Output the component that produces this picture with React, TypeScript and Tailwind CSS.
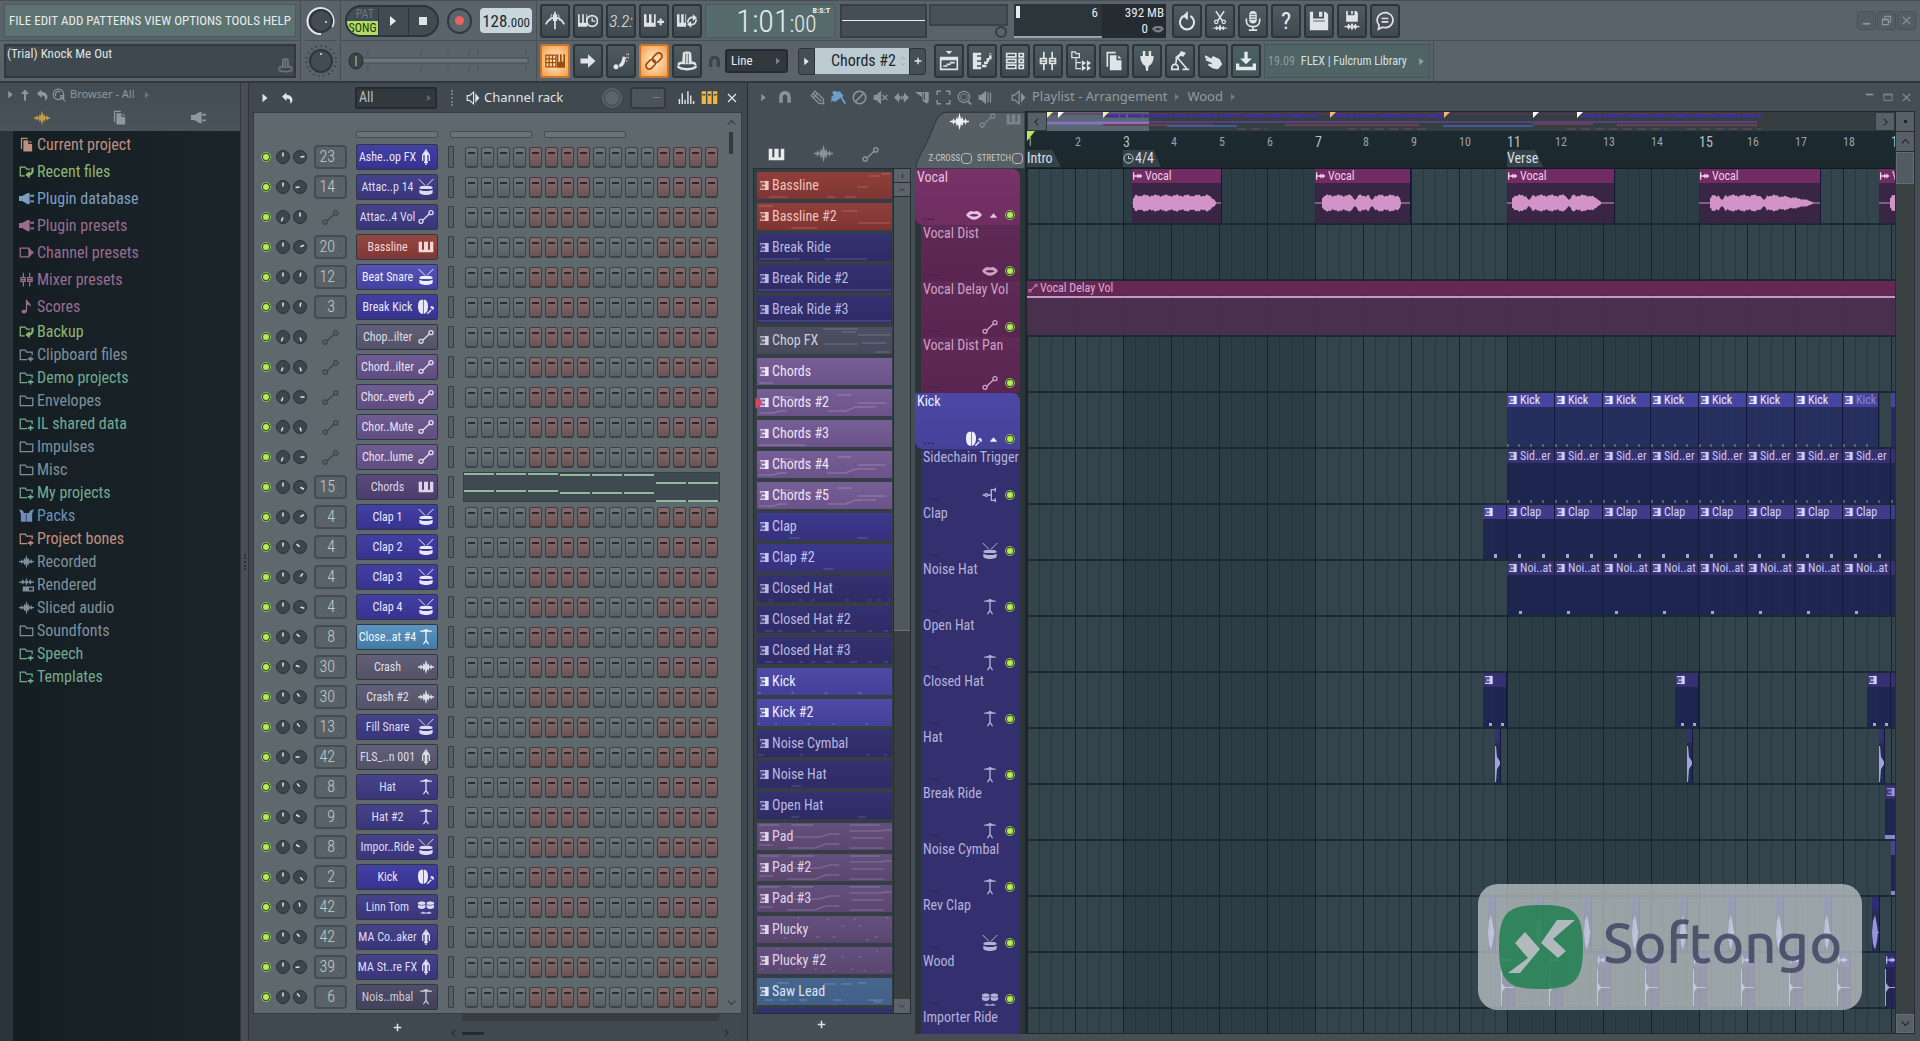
import type { ReactNode } from 'react';

const FONT = "font-['Roboto_Condensed',Roboto,'Open_Sans',sans-serif]";

/* ------------------------------------------------------------------ icons */

const S = { fill: 'none', stroke: 'currentColor', strokeWidth: 2 } as const;

const ICONS: Record<string, ReactNode> = {
  piano: <path d="M1 4h5v12h3V4h6v12h3V4h5v16H1z" />,
  wave: <path d="M0 11h3l1.500-3 1.500 3h1l1.500-5 1.500 3L12 1l2 8 1.500-3L17 11h1l1.500-3 1.500 3h3v2h-3l-1.500 3-1.500-3h-1l-1.500 5-1.500-3L12 23l-2-8-1.500 3L7 13H6l-1.500 3L3 13H0z" />,
  auto: (
    <g {...S}>
      <circle cx="4.500" cy="18.500" r="3" />
      <circle cx="19.500" cy="5.500" r="3" />
      <path d="M7 17L17 7.500" />
    </g>
  ),
  drum: (
    <g>
      <path d="M1 0l9 9M23 0l-9 9" {...S} strokeWidth="1.500" />
      <path d="M2 13c0-2 4-3 10-3s10 1 10 3-4 2-10 2-10 0-10-2z" />
      <path d="M2 16c2 1 6 2 10 2s8-1 10-2v4c0 3-5 4-10 4S2 23 2 20z" />
    </g>
  ),
  kick: (
    <g>
      <path d="M6 1C2 1 0 5 0 11s2 11 6 11h2V1zM9 1c4 0 6 4 6 10s-2 11-6 11z" />
      <path d="M14 22l6-6" {...S} />
      <path d="M18 12l5 5 1-4-3-3z" />
    </g>
  ),
  hat: <path d="M3 2.500c5-.500 7-1 8-2.500h2c1 1.500 3 2 8 2.500V4h-8v13l4 6h-2l-3-4-3 4H7l4-6V4H3z" />,
  tom: (
    <g>
      <path d="M0 6c0-3 11-3 11 0v6c0 4-11 4-11 0zM13 6c0-3 11-3 11 0v6c0 4-11 4-11 0z" />
      <path d="M7 19v2h10v-2M4 21h6M14 21h6" {...S} strokeWidth="1.500" />
      <path d="M0 8c3 2 8 2 11 0M13 8c3 2 8 2 11 0" stroke="#39357d" strokeWidth="1" fill="none" />
    </g>
  ),
  fx: (
    <g>
      <path d="M12 0l3 4H9z" />
      <path d="M6 18V9l3-5h6l3 5v9h-2V9h-2v10h1v2h-2v3h-2v-3H9v-2h1V9H8v9z" />
    </g>
  ),
  lips: <path d="M0 12c4-6 8-7 12-5 4-2 8-1 12 5-4 5-8 7-12 7S4 17 0 12zm5 0c4 3 10 3 14 0-4-2-10-2-14 0z" fillRule="evenodd" />,
  branch: (
    <g {...S}>
      <path d="M1 12h4M8 12h6M20 4h-6v16h6" />
      <circle cx="6.500" cy="12" r="2" />
      <path d="M20 1v6M20 17v6" />
    </g>
  ),
  pages: <path d="M3 1h11v2H5v16H3zM7 5h8v6h6v12H7zM17 5l4 4h-4z" />,
  plug: <path d="M0 8h5l9-5h3v18h-3l-9-5H0zM18 6h6v3h-6zM18 15h6v3h-6z" />,
  folder: <path d="M2 5h8l2 3h10v12H2z" {...S} />,
  folderPlus: (
    <g {...S}>
      <path d="M13 20H2V5h8l2 3h9v5" />
      <path d="M14 19h9M18.500 15v8" strokeWidth="2.500" />
    </g>
  ),
  recent: (
    <g {...S}>
      <path d="M9 19H2V5h8l2 3h6" />
      <path d="M21 6c2 5 0 11-6 11" strokeWidth="3.500" />
      <path d="M17 11v12l-7-6z" fill="currentColor" stroke="none" />
    </g>
  ),
  chan: (
    <g>
      <path d="M2 5h14v14H2z" {...S} />
      <path d="M16 5l4 3v2h3v4h-3v2l-4 3z" />
    </g>
  ),
  mixer: (
    <g {...S}>
      <path d="M7 1v7M7 16v7M17 1v7M17 16v7M3 9h7v6H3zM14 9h7v6h-7zM3 12h7M14 12h7" />
    </g>
  ),
  note: <path d="M11 1h2c1 5 7 5 6 12-1-3-3-4-6-4v9c0 3-2 5-5 5-5 0-5-6 0-6 1 0 2 0 3 .500z" />,
  box: <path d="M0 2l6 2 2 4h8l2-4 6-2-3 7v13H3V9zM11 9v13h1V9z" fillRule="evenodd" />,
  rendered: (
    <g>
      <path d="M0 7h4l2-4 2 4h2l2-6 2 6h2l2-4 2 4h4v2h-4l-2 3-2-3h-2l-2 5-2-5H8l-2 3-2-3H0z" />
      <path d="M7 16h16v6H7z" {...S} />
      <path d="M7 16h9v6H7z" />
    </g>
  ),
  pattern: (
    <g>
      <path d="M13 2h8v20h-8z" />
      <path d="M2 4h12M2 20h12M6 12h8" {...S} strokeWidth="3" />
      <path d="M2 9h9M2 15h9" {...S} strokeWidth="1.500" opacity=".6" />
    </g>
  ),
  audio: <path d="M0 3h3v7h7V6l5 5V6l8 6-8 6v-5l-5 5v-4H3v7H0z" />,
  speaker: (
    <g>
      <path d="M2 8h4l7-6v20l-7-6H2z" {...S} />
      <path d="M16 4l7 8-7 8z" />
    </g>
  ),
  tri: <path d="M6 2l12 10L6 22z" />,
  up: <path d="M12 1l8 9h-6v13h-4V10H4z" />,
  undo: <path d="M2 9l9-8v5c7 0 12 4 12 10 0 3-2 6-5 7 2-7-1-10-7-10v5z" />,
  searchBig: (
    <g {...S}>
      <circle cx="11" cy="11" r="9" />
      <path d="M6 14v-3a5 5 0 0 1 8-4M15 13h5v5h-5zM19 19l4 4" />
    </g>
  ),
  metronome: (
    <g {...S}>
      <path d="M1 16C4 10 8 8 12 8s8 2 11 8" />
      <path d="M12 1v21" strokeWidth="2" />
      <path d="M12 4v8" strokeWidth="5" />
      <path d="M8 4l-2 8M16 4l2 8" strokeWidth="1" />
    </g>
  ),
  pianoClock: (
    <g>
      <path d="M0 4h2v10h3V4h2v10h3V4h1v15H0z" />
      <circle cx="17" cy="12" r="6.500" {...S} />
      <path d="M17 8v4h4" {...S} strokeWidth="1.500" />
    </g>
  ),
  pianoPlus: (
    <g>
      <path d="M0 4h3v10h3V4h3v10h3V4h2v15H0z" />
      <path d="M16 13h8M20 9v8" {...S} strokeWidth="2.500" />
    </g>
  ),
  pianoLoop: (
    <g>
      <path d="M0 4h3v10h2V4h3v10h2V4h1v15H0z" />
      <path d="M13 14c0-5 3-7 7-6M23 10c0 5-3 7-7 6" {...S} />
      <path d="M19 4l5 4-5 4zM17 12l-5 4 5 4z" />
    </g>
  ),
  keyboard: (
    <g>
      <path d="M1 5h12v14H1zM1 9.500h12M1 14h12M5 5v14M9 5v14" {...S} strokeWidth="1.500" />
      <path d="M14 4h10v16H14zM16 4v9h2V4zM20 4v9h2V4z" fillRule="evenodd" />
    </g>
  ),
  arrow: <path d="M3 9h9V4l9 8-9 8v-5H3z" />,
  slide: (
    <g>
      <circle cx="6" cy="19" r="3" />
      <path d="M10 18c4-1 5-5 6-11" {...S} strokeWidth="4" />
      <path d="M19 3v10M21 3v8" {...S} strokeWidth="1" strokeDasharray="2 2" />
    </g>
  ),
  link: (
    <g {...S} transform="rotate(-45 12 12)">
      <rect x="0" y="8" width="13" height="8" rx="4" />
      <rect x="11" y="8" width="13" height="8" rx="4" />
    </g>
  ),
  stamp: (
    <g>
      <path d="M7 2c2-2 8-2 10 0l1 14H6zM10 3v12h1V3zM13 3v12h1V3z" fillRule="evenodd" />
      <path d="M2 17c0-2 2-3 4-3M22 17c0-2-2-3-4-3M1 18c2 5 20 5 22 0" {...S} strokeWidth="3" />
    </g>
  ),
  magnet: <path d="M2 22V12C2-2 22-2 22 12v10h-6V12c0-6-8-6-8 0v10z" />,
  playlist: (
    <g>
      <path d="M8 0h8l-4 4z" />
      <path d="M2 8h20v14H2zM2 10h20" {...S} />
      <path d="M5 18h5M9 16h5M13 14h6" {...S} />
    </g>
  ),
  roll: (
    <g>
      <path d="M1 2h10v3H6v2h5v4H6v2h5v4H6v2h5v3H1z" />
      <path d="M12 18h4v-4h3v-4h3V3" {...S} strokeWidth="3" strokeDasharray="5 1" />
    </g>
  ),
  rack: (
    <g {...S}>
      <path d="M2 3h11v4H2zM2 10h11v4H2zM2 17h11v4H2zM17 3h5v4h-5zM17 10h5v4h-5zM17 17h5v4h-5z" />
    </g>
  ),
  tree: (
    <g {...S}>
      <path d="M1 8V1h4l1 2h4v5zM6 9v12h6M6 14h6" strokeWidth="1.500" />
      <path d="M13 11v7l5-3.500zM19 11v7l5-3.500zM13 17v7l5-3.500zM19 17v7l5-3.500z" fill="currentColor" stroke="none" />
    </g>
  ),
  plugDown: <path d="M7 0h3v6h4V0h3v6h3c0 6-2 10-6 12l-1 6h-2l-1-6C6 16 4 12 4 6h3z" />,
  crane: (
    <g {...S}>
      <path d="M2 22c0-4 2-6 4-6s4 2 4 6zM7 15L8 8M9 8l11 13M15 22h8" />
      <path d="M7 9l8-7" strokeWidth="3" />
      <path d="M13 0l6 2-3 5-5-2z" fill="currentColor" stroke="none" />
    </g>
  ),
  hand: <path d="M2 8l1-3 7 4 2-3 8 4 3 6-5 6-6-1-6-4 1-2 4 1-1-2-7-3 1-2 4 1z" />,
  download: (
    <g>
      <path d="M10 1h4v8h5l-7 7-7-7h5z" />
      <path d="M2 15v6h20v-6" {...S} strokeWidth="4" />
    </g>
  ),
  loopback: (
    <g {...S} strokeWidth="2.500">
      <path d="M8 6a8.500 8.500 0 1 0 8 0" />
      <path d="M13 0L7 6l6 5z" fill="currentColor" stroke="none" />
    </g>
  ),
  cutWave: (
    <g>
      <path d="M7 0l8 12M17 0L9 12" {...S} strokeWidth="1.800" />
      <circle cx="7.500" cy="13" r="2" {...S} strokeWidth="1.500" />
      <circle cx="16.500" cy="13" r="2" {...S} strokeWidth="1.500" />
      <path d="M3 20h3l2-2 2 2 2-4 2 4 2-2 2 2h3v1h-3l-2 2-2-2-2 3-2-3-2 2-2-2H3z" />
    </g>
  ),
  mic: (
    <g>
      <rect x="7.500" y="0" width="9" height="15" rx="4.500" />
      <path d="M4 9v3c0 9 16 9 16 0V9M12 18v4M7 23h10" {...S} />
      <path d="M9 4h6M9 7h6M9 10h6" stroke="#444e55" strokeWidth="1" />
    </g>
  ),
  saveFill: (
    <g>
      <path d="M1 1h4v8h13V1h2l3 3v19H1zM12 1h4v6h-4z" fillRule="evenodd" />
      <path d="M5 12h14" stroke="#444e55" strokeWidth="1" />
    </g>
  ),
  saveWave: (
    <g>
      <path d="M5 0h2v5h8V0h2l2 2v11H5zM11 0h2v4h-2z" fillRule="evenodd" />
      <path d="M3 18h3l2-3 2 3 2-4 2 4 2-3 2 3h3v1.500h-3l-2 3-2-3-2 4-2-4-2 3-2-3H3z" />
    </g>
  ),
  comment: (
    <g {...S}>
      <path d="M4 22l1-5a9.500 9 0 1 1 4 2.500z" />
      <path d="M8 9h8M8 13h8" />
    </g>
  ),
  pencil: (
    <g {...S}>
      <path d="M2 9l6-7 13 12 1 8-8-1zM5 6l13 12M6 12l6-7" />
    </g>
  ),
  brush: (
    <g>
      <path d="M2 3l5-2 3 2 4-1 6 7-2 3-3 1-9 6-3-2-3 3 1-6-1-3 4-2z" />
      <path d="M17 13l6 9" {...S} strokeWidth="3" />
    </g>
  ),
  no: (
    <g {...S} strokeWidth="2.500">
      <circle cx="12" cy="12" r="10" />
      <path d="M5 19L19 5" />
    </g>
  ),
  mute: (
    <g>
      <path d="M1 8h4l8-7v22l-8-7H1z" />
      <path d="M15 8l8 8M23 8l-8 8" {...S} />
    </g>
  ),
  stretch: <path d="M0 12l8-8v5h2v6H8v5zM24 12l-8-8v5h-2v6h2v5zM11 9h2v6h-2z" />,
  slice: <path d="M0 3h11v8zM12 3h10v15l-3 4-7-5zM14 5v11h2V5z" fillRule="evenodd" />,
  select: <path d="M2 8V2h6M16 2h6v6M22 16v6h-6M8 22H2v-6" {...S} strokeWidth="2.500" />,
  zoom: (
    <g {...S}>
      <circle cx="11" cy="11" r="9" />
      <circle cx="11" cy="11" r="5" opacity=".6" />
      <path d="M17 18l6 5" strokeWidth="3" />
    </g>
  ),
  playback: (
    <g>
      <path d="M1 8h4l8-7v22l-8-7H1z" />
      <path d="M16 4v16M20 4v16" {...S} />
    </g>
  ),
  bars: <path d="M2 21v-7M6 21V6M10 21v-6M14 21V3M18 21V9M22 21v-4" {...S} />,
  cols: (
    <g>
      <path d="M1 3h6v18H1zM9 3h6v18H9zM17 3h6v18h-6z" />
      <path d="M2 8h4M10 8h4M18 8h4" stroke="#4a4530" strokeWidth="2" />
    </g>
  ),
  close: <path d="M4 4l16 16M20 4L4 20" {...S} strokeWidth="2.500" />,
  left: <path d="M15 4l-8 8 8 8" {...S} strokeWidth="2.500" />,
  right: <path d="M9 4l8 8-8 8" {...S} strokeWidth="2.500" />,
  chevUp: <path d="M4 16l8-8 8 8" {...S} strokeWidth="2.500" />,
  chevDown: <path d="M4 8l8 8 8-8" {...S} strokeWidth="2.500" />,
  plus: <path d="M12 2v20M2 12h20" {...S} strokeWidth="4" />,
  clock: (
    <g {...S}>
      <circle cx="12" cy="12" r="10" />
      <path d="M12 6v6h6" />
    </g>
  ),
  min: <path d="M4 17h16v4H4z" />,
  minTop: <path d="M2 4h18v4H2z" />,
  max: <path d="M2 5h20v15H2zM2 7h20" {...S} />,
  restore: <path d="M3 9h13v12H3zM3 11h13M8 8V3h13v12h-4" {...S} strokeWidth="2.500" />,
};

function Icon({ n, s = 16, c = '' }: { n: string; s?: number; c?: string }) {
  return (
    <svg viewBox="0 0 24 24" width={s} height={s} fill="currentColor" className={`shrink-0 ${c}`} aria-hidden="true">
      {ICONS[n]}
    </svg>
  );
}

/* ---------------------------------------------------------------- toolbar */

function ToolButton({ n, label, hot, teal, text }: { n?: string; label: string; hot?: boolean; teal?: boolean; text?: string }) {
  const look = hot
    ? 'border-[#c8762c] bg-radial from-[#fff0d0] to-[#f39a3e] text-[#a14c0d]'
    : teal
      ? 'border-[#2c353c] bg-linear-to-b from-[#4b5f63] to-[#46585c] text-[#e3e9ea]'
      : 'border-[#2c353c] bg-linear-to-b from-[#505a61] to-[#3f4950] text-[#e0e4e6]';
  return (
    <button aria-label={label} className={`flex h-[34px] w-[30px] items-center justify-center rounded-[3px] border-2 ${look}`}>
      {n ? <Icon n={n} s={20} /> : <span className="text-[17px] leading-5 font-light italic">{text}</span>}
    </button>
  );
}

function BigKnob({ label, arc }: { label: string; arc?: boolean }) {
  return (
    <span className="relative block size-8">
      <input type="range" aria-label={label} className="absolute inset-0 size-8 opacity-0" />
      <svg viewBox="0 0 32 32" className="size-8">
        {arc ? (
          <path d="M16 29A13 13 0 1 1 27 22" fill="none" stroke="#e4e8ea" strokeWidth="2" />
        ) : (
          <circle cx="16" cy="16" r="15" fill="none" stroke="#2f383e" strokeWidth="2" strokeDasharray="1 4" />
        )}
        <circle cx="16" cy="16" r="11" fill="#434c53" stroke="#2d363c" strokeWidth="2" />
        <circle cx={arc ? 21 : 16} cy={arc ? 17 : 9} r="1" fill="#dfe5e8" />
      </svg>
    </span>
  );
}

const MENU = ['FILE', 'EDIT', 'ADD', 'PATTERNS', 'VIEW', 'OPTIONS', 'TOOLS', 'HELP'];

function TopBar() {
  return (
    <header className="flex h-[83px] shrink-0 border-t border-b-2 border-t-[#475056] border-b-[#2f383f] bg-[#5a6369] text-[#e6ebec]">
      <div className="flex w-[301px] flex-col border-r border-[#474f55]">
        <div className="h-10 border-b border-[#474f55] px-1 py-[3px]">
          <nav className="flex h-full items-center justify-between border border-[#4a5a5b] bg-[#5d7371] px-1 text-[13px]">
            {MENU.map((m) => (
              <button key={m}>{m}</button>
            ))}
          </nav>
        </div>
        <div className="h-10 px-1 py-[3px]">
          <div className="flex h-full items-start justify-between border-2 border-[#30393f] bg-[#40484f] px-px text-[13px] leading-4 text-[#dfe4e6]">
            <span>(Trial) Knock Me Out</span>
            <Icon n="stamp" s={15} c="mt-3 text-[#6c757b]" />
          </div>
        </div>
      </div>
      <div className="flex w-10 flex-col items-center border-r border-[#474f55]">
        <div className="flex h-10 items-center border-b border-[#474f55]">
          <BigKnob label="Main volume" arc />
        </div>
        <div className="flex h-10 items-center">
          <BigKnob label="Main pitch" />
        </div>
      </div>
      <div className="flex w-[196px] flex-col border-r border-[#474f55]">
        <div className="flex h-10 items-center gap-1 border-b border-[#474f55] px-1">
          <div className="flex h-8 w-[98px] overflow-hidden rounded-2xl border-2 border-[#2b343a] bg-[#414b52]">
            <div className="flex w-[31px] flex-col text-right text-[12px]">
              <button className="h-[14px] pr-1 text-right leading-[14px] text-[#6c757b]">PAT</button>
              <button className="h-[14px] bg-[#b0dd62] leading-[14px] text-[#27340f]">SONG</button>
            </div>
            <button aria-label="Play" className="flex flex-1 items-center justify-center border-x border-[#2b343a]">
              <Icon n="tri" s={12} />
            </button>
            <button aria-label="Stop" className="flex flex-1 items-center justify-center">
              <span className="size-2 bg-[#dfe4e6]" />
            </button>
          </div>
          <button aria-label="Record" className="ml-1 flex size-[26px] items-center justify-center rounded-full border-2 border-[#2f383e] bg-[#5b646b]">
            <span className="size-[9px] rounded-full bg-[#f0605c]" />
          </button>
          <button aria-label="Tempo" className="ml-1 flex h-[25px] w-[54px] items-center justify-center rounded-[4px] bg-[#c9d7dd] text-[#20282d]">
            <span className="text-[17px] leading-6">128</span>
            <span className="mt-1 text-[13px] leading-5">.000</span>
          </button>
        </div>
        <div className="relative flex h-10 items-center pl-[7px]">
          <input type="range" aria-label="Song position" className="absolute inset-x-3 opacity-0" />
          <svg viewBox="0 0 182 30" className="h-[30px] w-[182px]">
            <path d="M20 4v6M73 4v6M100 4v6M121 4v6M130 4v6M178 4v6M20 20v6M73 20v6M100 20v6M121 20v6M130 20v6M178 20v6" stroke="#49525a" />
            <rect x="14" y="12" width="166" height="5" fill="#6b757b" stroke="#474f55" />
            <ellipse cx="8" cy="15" rx="7" ry="8" fill="#3b444a" stroke="#252d32" />
            <path d="M8 10v10" stroke="#b8e07a" />
          </svg>
        </div>
      </div>

      <div className="flex flex-1 flex-col">
        <div className="flex h-10 items-center border-b border-[#474f55] pl-[3px]">
          <div className="flex gap-[3px]">
            <ToolButton n="metronome" label="Metronome" />
            <ToolButton n="pianoClock" label="Wait for input" />
            <ToolButton text="3.2:" label="Countdown" />
            <ToolButton n="pianoPlus" label="Overdub" />
            <ToolButton n="pianoLoop" label="Loop recording" />
          </div>
          <div className="ml-[3px] flex h-[34px] w-[130px] justify-end border border-[#4a5a5b] bg-[#566b6c] font-light">
            <div className="flex items-baseline leading-8">
              <span className="text-[32px]">1:01</span>
              <span className="text-[23px]">:00</span>
            </div>
            <span className="-ml-1 pr-1 text-[8px] leading-3 font-bold">B:S:T</span>
          </div>
          <div className="ml-[5px] flex h-[34px] w-[87px] items-center border-2 border-[#363f45] bg-[#454e55]">
            <div className="h-px w-full bg-[#e6ebec]" />
          </div>
          <div className="ml-[2px] flex h-[34px] w-[79px] flex-col">
            <div className="h-6 border-2 border-[#3a4349] bg-[#485157]" />
            <span className="mr-px self-end rounded-full border-2 border-[#353e44] p-1" />
          </div>
          <div className="ml-[6px] flex h-[34px] w-[152px] bg-[#2c353a] text-[13px] leading-4">
            <div className="flex flex-1 justify-between border-b-2 border-[#9aa3a7] py-px pr-1 pl-[2px]">
              <span className="mt-px h-3 w-1 bg-[#e6ebec]" />
              <span>6</span>
            </div>
            <div className="flex w-16 flex-col bg-[#242c31] px-[2px] py-px text-right">
              <span>392 MB</span>
              <span className="flex items-center justify-end gap-1">
                0 <Icon n="lips" s={12} c="text-[#78828a]" />
              </span>
            </div>
          </div>
          <div className="ml-[6px] flex gap-[3px]">
            <ToolButton n="loopback" label="Undo" />
            <ToolButton n="cutWave" label="Cut" />
            <ToolButton n="mic" label="Record audio" />
            <button aria-label="Help" className="flex h-[34px] w-[30px] items-center justify-center rounded-[3px] border-2 border-[#2c353c] bg-linear-to-b from-[#505a61] to-[#3f4950] text-[24px]">
              ?
            </button>
            <ToolButton n="saveFill" label="Save" />
            <ToolButton n="saveWave" label="Render" />
            <ToolButton n="comment" label="Project info" />
          </div>
          <div className="mr-1 ml-auto flex gap-px text-[#8d969b]">
            {['min', 'restore', 'close'].map((n) => (
              <button key={n} aria-label={n} className="flex h-[19px] w-[19px] items-center justify-center rounded-[3px] border border-[#49525a] bg-[#545d64]">
                <Icon n={n} s={11} />
              </button>
            ))}
          </div>
        </div>

        <div className="flex h-10 items-center pl-[3px]">
          <div className="flex gap-[3px]">
            <ToolButton n="keyboard" label="Typing keyboard" hot />
            <ToolButton n="arrow" label="Step edit" />
            <ToolButton n="slide" label="Note slide" />
            <ToolButton n="link" label="Multilink" hot />
            <ToolButton n="stamp" label="Stamp" />
          </div>
          <Icon n="magnet" s={13} c="ml-[6px] text-[#3b444a]" />
          <button className="ml-1 flex h-6 w-[63px] items-center justify-between rounded-[3px] border-2 border-[#252c31] bg-[#31393f] px-1 text-[13px]">
            Line <Icon n="tri" s={8} c="text-[#7c858b]" />
          </button>
          <button aria-label="Previous pattern" className="ml-[10px] flex h-[27px] w-[17px] items-center justify-center rounded-l-[3px] border border-[#2c353c] bg-[#444e55]">
            <Icon n="tri" s={9} />
          </button>
          <button className="flex h-[26px] w-[94px] items-center justify-end gap-1 bg-[#bccbd2] pr-[3px] text-[16px] text-[#1e272c]">
            Chords #2
            <span className="flex flex-col text-[#8b999f]">
              <Icon n="chevUp" s={6} />
              <Icon n="chevDown" s={6} />
            </span>
          </button>
          <button aria-label="Add pattern" className="flex h-[27px] w-[17px] items-center justify-center rounded-r-[3px] border border-[#2c353c] bg-[#444e55]">
            <Icon n="plus" s={8} />
          </button>
          <div className="ml-2 flex gap-[3px]">
            <ToolButton n="playlist" label="Playlist" />
            <ToolButton n="roll" label="Piano roll" />
            <ToolButton n="rack" label="Channel rack" />
            <ToolButton n="mixer" label="Mixer" />
            <ToolButton n="tree" label="Browser" />
            <ToolButton n="pages" label="Project picker" />
            <ToolButton n="plugDown" label="Plugin picker" />
            <ToolButton n="crane" label="Tempo tapper" />
            <ToolButton n="hand" label="Touch controller" />
            <ToolButton n="download" label="Updates" teal />
          </div>
          <button className="ml-[3px] flex h-[34px] w-[166px] items-center border border-[#43575a] bg-[#506466] px-[3px] text-[12px] whitespace-nowrap text-[#d7e0e0]">
            <span className="mr-[6px] text-[#8c9c9e]">19.09</span>FLEX | Fulcrum Library
            <Icon n="tri" s={9} c="ml-auto text-[#8c9c9e]" />
          </button>
          <div className="ml-[3px] h-full border-l border-[#474f55]" />
        </div>
      </div>
    </header>
  );
}

/* ---------------------------------------------------------------- browser */

const BROWSER_TOP: [string, string, string][] = [
  ['pages', 'Current project', 'text-[#c08f7e]'],
  ['recent', 'Recent files', 'text-[#8fb673]'],
  ['plug', 'Plugin database', 'text-[#7d9dc2]'],
  ['plug', 'Plugin presets', 'text-[#9c6c92]'],
  ['chan', 'Channel presets', 'text-[#9c6c92]'],
  ['mixer', 'Mixer presets', 'text-[#9c6c92]'],
  ['note', 'Scores', 'text-[#9c6c92]'],
];
const BROWSER_DIRS: [string, string, string][] = [
  ['recent', 'Backup', 'text-[#8fb673]'],
  ['folderPlus', 'Clipboard files', 'text-[#7f909c]'],
  ['folderPlus', 'Demo projects', 'text-[#74aa90]'],
  ['folder', 'Envelopes', 'text-[#7f909c]'],
  ['folderPlus', 'IL shared data', 'text-[#74aa90]'],
  ['folder', 'Impulses', 'text-[#7f909c]'],
  ['folder', 'Misc', 'text-[#7f909c]'],
  ['folderPlus', 'My projects', 'text-[#74aa90]'],
  ['box', 'Packs', 'text-[#6f8fb8]'],
  ['folderPlus', 'Project bones', 'text-[#c08f7e]'],
  ['wave', 'Recorded', 'text-[#7f909c]'],
  ['rendered', 'Rendered', 'text-[#7f909c]'],
  ['wave', 'Sliced audio', 'text-[#7f909c]'],
  ['folder', 'Soundfonts', 'text-[#7f909c]'],
  ['folderPlus', 'Speech', 'text-[#74aa90]'],
  ['folderPlus', 'Templates', 'text-[#74aa90]'],
];

function BrowserItem({ item, tall }: { item: [string, string, string]; tall?: boolean }) {
  return (
    <a href="#" className={`flex items-center gap-[3px] pl-[6px] text-[16px] ${tall ? 'h-[27px]' : 'h-[23px]'} ${item[2]}`}>
      <Icon n={item[0]} s={15} /> {item[1]}
    </a>
  );
}

function Browser() {
  return (
    <aside className="flex w-60 shrink-0 flex-col">
      <div className="h-12 bg-linear-to-b from-[#444c53] to-[#4a5359] text-[#8f989d]">
        <div className="flex h-[23px] items-center pl-[6px]">
          <Icon n="tri" s={9} />
          <Icon n="up" s={12} c="ml-1" />
          <Icon n="undo" s={12} c="ml-[5px]" />
          <Icon n="searchBig" s={14} c="ml-1" />
          <span className="ml-1 font-['Noto_Sans',sans-serif] text-[11px]">Browser - All</span>
          <Icon n="tri" s={8} c="ml-2 text-[#6c757b]" />
        </div>
        <div className="flex h-[23px] items-center">
          <button aria-label="All" className="ml-[34px] text-[#c39a4a]"><Icon n="wave" s={16} /></button>
          <button aria-label="Files" className="ml-[62px]"><Icon n="pages" s={15} /></button>
          <button aria-label="Plugins" className="ml-[64px]"><Icon n="plug" s={15} /></button>
        </div>
      </div>
      <div className="flex flex-1">
        <div className="w-[13px] bg-[#2b343a]" />
        <div className="flex-1 bg-linear-to-r from-[#141e23] to-[#1a2429]">
          <nav>{BROWSER_TOP.map((b) => <BrowserItem key={b[1]} item={b} tall />)}</nav>
          <nav>{BROWSER_DIRS.map((b) => <BrowserItem key={b[1]} item={b} />)}</nav>
        </div>
      </div>
    </aside>
  );
}

/* ----------------------------------------------------------- channel rack */

type Tone = 'navy' | 'blue' | 'bright' | 'red' | 'grey' | 'purple' | 'plum' | 'sky' | 'dim';
const TONES: Record<Tone, string> = {
  navy: 'from-[#46438a] to-[#38357a] text-[#dddcf2]',
  blue: 'from-[#4240a3] to-[#363390] text-[#e8e7fb]',
  bright: 'from-[#5654b6] to-[#4442a0] text-[#eeeefe]',
  red: 'from-[#954742] to-[#7f3735] text-[#f3d8d4]',
  grey: 'from-[#626079] to-[#545267] text-[#dedde6]',
  purple: 'from-[#6f5c92] to-[#5f4d80] text-[#e8e0f3]',
  plum: 'from-[#594a7b] to-[#4c3d6c] text-[#dcd4e8]',
  sky: 'from-[#5c95c0] to-[#447ba6] text-[#eef6fc]',
  dim: 'from-[#4f4d68] to-[#434159] text-[#cbcad8]',
};

/* insert number, name, icon, tone, pan and volume angles */
const CHANNELS: [number, string, string, Tone, number, number][] = [
  [23, 'Ashe..op FX', 'fx', 'blue', 0, 85],
  [14, 'Attac..p 14', 'drum', 'navy', 0, -95],
  [0, 'Attac..4 Vol', 'auto', 'navy', -160, 0],
  [20, 'Bassline', 'piano', 'red', 0, 65],
  [12, 'Beat Snare', 'drum', 'bright', 0, 10],
  [3, 'Break Kick', 'kick', 'blue', 0, 10],
  [0, 'Chop..ilter', 'auto', 'grey', -160, 165],
  [0, 'Chord..ilter', 'auto', 'purple', -160, 165],
  [0, 'Chor..everb', 'auto', 'purple', -160, 90],
  [0, 'Chor..Mute', 'auto', 'purple', -160, 165],
  [0, 'Chor..lume', 'auto', 'purple', -160, 90],
  [15, 'Chords', 'piano', 'plum', 0, 120],
  [4, 'Clap 1', 'drum', 'blue', 0, 60],
  [4, 'Clap 2', 'drum', 'blue', 0, -50],
  [4, 'Clap 3', 'drum', 'blue', 0, 40],
  [4, 'Clap 4', 'drum', 'blue', 0, 105],
  [8, 'Close..at #4', 'hat', 'sky', 0, -50],
  [30, 'Crash', 'wave', 'grey', 0, -70],
  [30, 'Crash #2', 'wave', 'grey', 0, -40],
  [13, 'Fill Snare', 'drum', 'navy', 0, -40],
  [42, 'FLS_..n 001', 'fx', 'grey', 0, -90],
  [8, 'Hat', 'hat', 'navy', 0, -40],
  [9, 'Hat #2', 'hat', 'navy', 0, -60],
  [8, 'Impor..Ride', 'drum', 'navy', 0, -60],
  [2, 'Kick', 'kick', 'blue', 0, 140],
  [42, 'Linn Tom', 'tom', 'navy', 0, -10],
  [42, 'MA Co..aker', 'fx', 'navy', 0, -45],
  [39, 'MA St..re FX', 'fx', 'navy', 0, -95],
  [6, 'Nois..mbal', 'hat', 'dim', 0, -40],
];

function Led({ label }: { label: string }) {
  return (
    <button aria-label={label} className="flex size-[10px] shrink-0 items-center justify-center rounded-full border border-[#8fc450] bg-[#33402b]">
      <span className="size-[6px] rounded-full bg-[#b4ec5c]" />
    </button>
  );
}

function Knob({ angle, label }: { angle: number; label: string }) {
  return (
    <span className="relative block size-[14px]">
      <input type="range" aria-label={label} className="absolute inset-0 size-[14px] opacity-0" />
      <svg viewBox="0 0 14 14" className="size-[14px]">
        <circle cx="7" cy="7" r="6.500" fill="#3d464c" stroke="#283136" />
        <path d="M7 2.500v4" stroke="#dfe6e8" strokeWidth="1.500" transform={`rotate(${angle} 7 7)`} />
      </svg>
    </span>
  );
}

function Steps({ name }: { name: string }) {
  return (
    <div className="flex gap-[3px]">
      {Array.from({ length: 16 }, (_, i) => (
        <input
          key={i}
          type="checkbox"
          aria-label={`${name} step ${i + 1}`}
          className={
            Math.floor(i / 4) % 2
              ? 'h-[21px] w-[13px] appearance-none rounded-[3px] border border-b-2 border-[#3c3c40] bg-[linear-gradient(#2a2a2c,#2a2a2c),linear-gradient(#876b6b,#6d5354)] bg-[length:7px_2px,100%_100%] bg-[position:center_4px,0_0] bg-no-repeat'
              : 'h-[21px] w-[13px] appearance-none rounded-[3px] border border-b-2 border-[#3b4549] bg-[linear-gradient(#2a2f32,#2a2f32),linear-gradient(#6d787b,#566164)] bg-[length:7px_2px,100%_100%] bg-[position:center_4px,0_0] bg-no-repeat'
          }
        />
      ))}
    </div>
  );
}

function ChannelRow({ ch }: { ch: (typeof CHANNELS)[number] }) {
  const [num, name, icon, tone, pan, vol] = ch;
  return (
    <div className="flex h-[30px] items-center pl-[7px]">
      <Led label={`Mute ${name}`} />
      <div className="ml-[5px] flex gap-[3px]">
        <Knob angle={pan} label={`${name} pan`} />
        <Knob angle={vol} label={`${name} volume`} />
      </div>
      {num ? (
        <button className="ml-[7px] flex h-6 w-[33px] items-center justify-end gap-[3px] rounded-[4px] border-2 border-[#434c52] bg-[#596367] pr-[2px] text-[16px] font-light text-[#c3cacd]">
          {num}
          <span className="flex flex-col gap-px text-[#424b51]">
            <Icon n="chevUp" s={5} />
            <Icon n="chevDown" s={5} />
          </span>
        </button>
      ) : (
        <span className="ml-[7px] flex w-[33px] justify-center text-[#3f484d]">
          <Icon n="auto" s={17} />
        </span>
      )}
      <button className={`ml-[9px] flex h-[26px] w-[82px] items-center rounded-[2px] border border-[#2f3646] bg-linear-to-b pr-[3px] text-[12px] ${TONES[tone]}`}>
        <span className="flex-1 text-center whitespace-nowrap">{name}</span>
        <Icon n={icon} s={16} />
      </button>
      <button aria-label={`Select ${name}`} className="ml-[10px] h-[22px] w-[6px] rounded-[1px] border border-[#353e43] bg-[#566064]" />
      {name === 'Chords' ? (
        <svg viewBox="0 0 257 30" className="ml-[9px] h-[30px] w-[257px]">
          <rect x=".500" y=".500" width="256" height="29" fill="#40494f" stroke="#363f44" />
          <path
            d="M1 2h30M33 2h30M65 2h30M97 3h30M129 3h30M161 3h30M193 11h30M225 11h30M1 19h30M33 19h30M65 19h30M97 21h30M129 21h30M161 21h30M193 29h30M225 29h30"
            stroke="#8fba9d"
            strokeWidth="2"
          />
        </svg>
      ) : (
        <div className="ml-[11px]"><Steps name={name} /></div>
      )}
    </div>
  );
}

function ChannelRack() {
  return (
    <section className="flex w-[498px] shrink-0 flex-col border-r-[5px] border-l-4 border-[#3f484e] bg-[#40494f]">
      <div className="flex h-[29px] items-center text-[#dfe4e6]">
        <Icon n="tri" s={10} c="ml-[7px]" />
        <Icon n="undo" s={12} c="ml-[11px]" />
        <button className="ml-[62px] flex h-[22px] w-[82px] items-center justify-between rounded-[2px] border-2 border-[#252c31] bg-[#31393f] px-[2px] text-[14px] text-[#b4bbbf]">
          All <Icon n="tri" s={8} c="text-[#5c656b]" />
        </button>
        <span className="ml-[14px] h-4 border-l-2 border-dotted border-[#747d83]" />
        <Icon n="speaker" s={14} c="ml-[13px]" />
        <h2 className="ml-1 w-[110px] font-['Noto_Sans',sans-serif] text-[13px]">Channel rack</h2>
        <span className="ml-2 flex size-5 items-center justify-center rounded-full border-2 border-[#596268]">
          <span className="size-[14px] rounded-full bg-[#5b646a]" />
        </span>
        <button className="ml-2 flex h-[22px] w-9 items-center justify-end rounded-[4px] border-2 border-[#333b41] bg-[#4b545a] pr-1 text-[10px] text-[#8a9399]">
          ---
        </button>
        <Icon n="bars" s={17} c="ml-[12px]" />
        <Icon n="cols" s={17} c="ml-[6px] text-[#edb544]" />
        <Icon n="close" s={12} c="ml-2" />
      </div>
      <div className="flex border border-[#343d43] bg-[#5f696d] pb-px">
        <div className="flex-1">
          <div className="flex h-[29px] items-end gap-3 pb-1 pl-[102px]">
            {[0, 1, 2].map((i) => (
              <span key={i} className="h-[7px] w-[82px] rounded-[2px] border border-[#444d52] bg-[#6a7478]" />
            ))}
          </div>
          {CHANNELS.map((c) => <ChannelRow key={c[1]} ch={c} />)}
        </div>
        <div className="flex w-[20px] flex-col items-center pt-1 pb-1 text-[#343c41]">
          <Icon n="chevUp" s={11} />
          <span className="mt-1 h-[22px] w-1 bg-[#343c41]" />
          <Icon n="chevDown" s={11} c="mt-auto" />
        </div>
      </div>
      <div className="flex flex-1 items-start text-[#dfe4e6]">
        <button aria-label="Add channel" className="mt-[9px] ml-[140px]"><Icon n="plus" s={9} /></button>
        <Icon n="left" s={10} c="mt-[14px] ml-[47px] text-[#252c31]" />
        <div className="ml-[3px] h-[7px] w-[257px] bg-[#353d41]">
          <div className="mt-[18px] h-[3px] w-[22px] bg-[#252c31]" />
        </div>
        <Icon n="right" s={10} c="mt-[14px] ml-[2px] text-[#252c31]" />
      </div>
    </section>
  );
}

/* --------------------------------------------------------------- playlist */

type PTone = 'red' | 'navy' | 'grey' | 'purple' | 'blue' | 'bright' | 'mauve' | 'sky';
const PTONES: Record<PTone, string> = {
  red: 'from-[#8f3f3b] to-[#803532] text-[#f0c4bd]',
  navy: 'from-[#333170] to-[#2e2b66] text-[#b9b8e0]',
  grey: 'from-[#4c4f62] to-[#474a5b] text-[#cfd0da]',
  purple: 'from-[#765f96] to-[#6b5389] text-[#eee4f6]',
  blue: 'from-[#3c388c] to-[#36327f] text-[#c6c5ee]',
  bright: 'from-[#4e4ba6] to-[#43409a] text-[#ecebff]',
  mauve: 'from-[#63507e] to-[#5b466f] text-[#e2d3e9]',
  sky: 'from-[#47658c] to-[#41618a] text-[#d7e6f4]',
};
/* name, tone, note preview path in a 134 x 27 box */
const SPARSE = 'M12 25h3M42 25h3M54 25h3M88 25h3M110 25h3M120 25h3M130 25h2';
const CHORDN = 'M2 24h14l6-2h8M20 8h12l8 2h14M70 22h18l10-4h20M80 6h14M100 14h28';
const PADN = 'M2 2h20M34 2h22M92 2h30M36 14h26l10-3h10M2 22h14M30 25h28l10-4h14M92 8h30l6-1h6M94 15h32M92 25h34';
const PATTERNS: [string, PTone, string][] = [
  ['Bassline', 'red', 'M12 25h18M70 25h8M88 25h10M100 15h10M112 4h10M124 2h8'],
  ['Bassline #2', 'red', 'M2 3h14M34 25h26M84 8h16M100 20h32'],
  ['Break Ride', 'navy', 'M2 25h40M67 25h42'],
  ['Break Ride #2', 'navy', 'M1 25h132'],
  ['Break Ride #3', 'navy', 'M1 25h132'],
  ['Chop FX', 'grey', 'M66 2h34M84 5h14M100 8h32M66 17h34M104 16h24M118 25h14'],
  ['Chords', 'purple', 'M2 25h14'],
  ['Chords #2', 'purple', CHORDN],
  ['Chords #3', 'purple', 'M2 25h46'],
  ['Chords #4', 'purple', CHORDN],
  ['Chords #5', 'purple', CHORDN],
  ['Clap', 'blue', 'M32 25h10M100 25h10'],
  ['Clap #2', 'blue', 'M66 25h10'],
  ['Closed Hat', 'navy', SPARSE],
  ['Closed Hat #2', 'navy', 'M8 25h8M20 25h5M54 25h4M68 25h8M80 25h4M86 25h12M110 25h4M126 25h4'],
  ['Closed Hat #3', 'navy', 'M8 25h8M20 25h5M42 25h4M54 25h4M68 25h8M92 25h8M110 25h4M126 25h4'],
  ['Kick', 'bright', 'M1 25h3M34 25h3M67 25h3M100 25h4'],
  ['Kick #2', 'bright', 'M1 25h2M18 25h2M50 25h2M75 25h2M108 25h2'],
  ['Noise Cymbal', 'navy', 'M1 25h6M42 25h3M109 25h3M126 25h3'],
  ['Noise Hat', 'navy', 'M34 25h10'],
  ['Open Hat', 'navy', 'M34 25h8M100 25h8'],
  ['Pad', 'mauve', PADN],
  ['Pad #2', 'mauve', PADN],
  ['Pad #3', 'mauve', PADN],
  ['Plucky', 'mauve', 'M40 2h2M70 3h2M96 3h2M128 2h2M84 10h3M101 10h3M26 22h3M59 21h3M75 21h3M108 24h3M117 21h3'],
  ['Plucky #2', 'mauve', 'M20 2h2M66 2h2M84 10h2M101 10h2M118 4h2M4 22h2M22 22h2M40 22h2M57 22h2M75 24h2M94 22h2M106 24h2M123 24h2'],
  ['Saw Lead', 'sky', 'M20 5h12M66 6h12M84 6h10M100 5h8M8 22h8M22 22h8M42 22h8M76 22h8M110 22h16M116 24h8'],
];

function Picker() {
  return (
    <div className="flex w-[158px] shrink-0 flex-col">
      <div className="flex h-[57px] shrink-0 items-end pb-[5px] text-[#8a9398]">
        <button aria-label="Patterns" className="ml-[15px] text-[#e6ebec]"><Icon n="piano" s={17} /></button>
        <button aria-label="Audio clips" className="ml-[29px]"><Icon n="wave" s={19} /></button>
        <button aria-label="Automation clips" className="ml-[29px]"><Icon n="auto" s={17} /></button>
      </div>
      <div className="flex min-h-0 flex-1 border border-[#262e33] bg-[#353e44]">
        <div className="flex flex-1 flex-col gap-1 overflow-hidden py-[3px] pr-px pl-[3px]">
          {PATTERNS.map(([name, tone, notes]) => (
            <button key={name} className={`relative flex h-[27px] shrink-0 items-center gap-[2px] bg-linear-to-b pl-[2px] text-[14px] ${PTONES[tone]}`}>
              <svg viewBox="0 0 134 27" preserveAspectRatio="none" className="absolute inset-0 h-full w-full opacity-20">
                <path d={notes} stroke="currentColor" strokeWidth="1.500" fill="none" />
              </svg>
              <Icon n="pattern" s={11} />
              {name}
              {name === 'Chords #2' && <Icon n="tri" s={14} c="absolute -left-[5px] text-[#e2435a]" />}
            </button>
          ))}
          <span className="h-[6px] shrink-0 bg-[#312e74]" />
        </div>
        <div className="flex w-[17px] flex-col border-l border-[#262e33] bg-[#373f42] text-[#20282c]">
          <span className="flex h-[14px] items-center justify-center border-b border-[#262e33] bg-[#5b646a]"><span className="h-1 w-px bg-[#20282c]" /></span>
          <span className="flex h-[14px] items-center justify-center border-b border-[#262e33] bg-[#5b646a]"><Icon n="chevUp" s={8} /></span>
          <span className="h-[434px] border-b border-[#6b7479] bg-[#4f585d]" />
          <span className="mt-auto flex h-[14px] items-center justify-center bg-[#5b646a]"><Icon n="chevDown" s={8} /></span>
        </div>
      </div>
      <button aria-label="Add" className="flex h-5 shrink-0 items-center pl-16 text-[#dfe4e6]"><Icon n="plus" s={9} /></button>
    </div>
  );
}

/* track name, icon, kind */
const TRACKS: [string, string, 'pinkHead' | 'pink' | 'blueHead' | 'navy'][] = [
  ['Vocal', 'lips', 'pinkHead'],
  ['Vocal Dist', 'lips', 'pink'],
  ['Vocal Delay Vol', 'auto', 'pink'],
  ['Vocal Dist Pan', 'auto', 'pink'],
  ['Kick', 'kick', 'blueHead'],
  ['Sidechain Trigger', 'branch', 'navy'],
  ['Clap', 'drum', 'navy'],
  ['Noise Hat', 'hat', 'navy'],
  ['Open Hat', 'hat', 'navy'],
  ['Closed Hat', 'hat', 'navy'],
  ['Hat', 'hat', 'navy'],
  ['Break Ride', 'hat', 'navy'],
  ['Noise Cymbal', 'hat', 'navy'],
  ['Rev Clap', 'drum', 'navy'],
  ['Wood', 'tom', 'navy'],
  ['Importer Ride', '', 'navy'],
];
const TRACK_TONES = {
  pinkHead: 'rounded-tr-lg rounded-bl-lg bg-linear-to-b from-[#783268] to-[#6f2d60] text-[#e9c0de]',
  pink: 'ml-[6px] bg-linear-to-b from-[#5f2a56] to-[#59244f] text-[#cfa0c4]',
  blueHead: 'rounded-tr-lg rounded-bl-lg bg-linear-to-b from-[#4c49a6] to-[#454198] text-[#eeeeff]',
  navy: 'ml-[6px] bg-[#343070] text-[#b3b3d8]',
};

function TrackHead({ t }: { t: (typeof TRACKS)[number] }) {
  const head = t[2] === 'pinkHead' || t[2] === 'blueHead';
  if (!t[1]) return <div className={`flex-1 pl-[2px] text-[14px] leading-[17px] ${TRACK_TONES[t[2]]}`}>{t[0]}</div>;
  return (
    <div className={`flex h-14 shrink-0 flex-col justify-between pr-[5px] pl-[2px] text-[14px] ${TRACK_TONES[t[2]]}`}>
      <span className="leading-[17px] whitespace-nowrap">{t[0]}</span>
      <div className="flex items-center justify-end gap-[7px] pb-[2px]">
        <span className="mr-auto pl-[6px] text-[14px] leading-4 text-[#1d1a40]">...</span>
        <Icon n={t[1]} s={16} />
        {head && <Icon n="tri" s={9} c="-rotate-90" />}
        <Led label={`Mute track ${t[0]}`} />
      </div>
    </div>
  );
}

type Clip = {
  x: number;
  w: number;
  label?: string;
  icon?: string;
  head: string;
  body: string;
  faded?: boolean;
  art?: ReactNode;
};

function blob(from: number, to: number, pinch: number[], tail: number) {
  const top: string[] = [];
  const bottom: string[] = [];
  for (let x = from; x <= to; x += 1) {
    const near = Math.min(...pinch.map((p) => Math.abs(p - x)), 99);
    let a = 7.5 + Math.sin(x * 1.7) * 0.6 + Math.sin(x * 0.6) * 0.8;
    if (near < 3) a = 3 + near;
    if (x > to - tail) a = Math.max(1, a * Math.sqrt((to - x) / tail));
    if (x < from + 2) a = 5;
    top.push(`${x} ${20 - a}`);
    bottom.unshift(`${x} ${20 + a}`);
  }
  return `M${top.join('L')}L${bottom.join('L')}z`;
}

function vocal(x: number, w: number, from: number, to: number, pinch: number[], tail: number): Clip {
  return {
    x,
    w,
    label: 'Vocal',
    icon: 'audio',
    head: 'bg-[#702c63] text-[#f3cdea]',
    body: 'bg-[#3a2344]/90',
    art: <path d={`M0 19.500H${w}V20.500H0z${blob(from, to, pinch, tail)}`} fill="#d193c8" />,
  };
}

const BAR = 48;
const bars = (n: number, start: number, make: (i: number) => Clip) => Array.from({ length: n }, (_, i) => ({ ...make(i), x: start + i * BAR }));
const NAVY_BODY = 'bg-[#1d2350]/90';
const ticks = <path d="M1 37v3M12 37v3M24 37v3M36 37v3" stroke="#8c8fc2" />;

const CLIPS: Clip[][] = [
  [
    vocal(105, 90, 1, 84, [], 8),
    vocal(288, 96, 7, 86, [40, 57], 3),
    vocal(480, 108, 5, 94, [22, 62], 12),
    vocal(672, 122, 11, 114, [23, 65], 40),
    vocal(852, 90, 11, 84, [], 8),
  ],
  [],
  [
    {
      x: 0,
      w: 1400,
      label: 'Vocal Delay Vol',
      icon: 'auto',
      head: 'bg-[#632854] text-[#e0a9d3]',
      body: 'bg-[#4d2f50]/90',
      art: <path d="M0 2H1400" stroke="#cf92c2" strokeWidth="2" />,
    },
  ],
  [],
  [
    ...bars(8, 480, (i) => ({ x: 0, w: i === 7 ? 36 : 48, label: 'Kick', icon: 'pattern', faded: i === 7, head: 'bg-[#4744a0] text-[#e6e6ff]', body: 'bg-[#252d60]/90', art: ticks })),
    { x: 864, w: 48, head: 'bg-[#4744a0]', body: 'bg-[#252d60]' },
  ],
  bars(9, 480, (i) => ({ x: 0, w: 48, label: i < 8 ? 'Sid..er' : '', icon: i < 8 ? 'pattern' : undefined, head: 'bg-[#353070] text-[#c9c9f0]', body: NAVY_BODY, art: ticks })),
  [
    { x: 456, w: 24, icon: 'pattern', head: 'bg-[#3f3a8a] text-[#dcdcfa]', body: NAVY_BODY, art: <path d="M11 35h3v4h-3z" fill="#a3a2dc" /> },
    ...bars(9, 480, (i) => ({ x: 0, w: 48, label: i < 8 ? 'Clap' : '', icon: i < 8 ? 'pattern' : undefined, head: 'bg-[#3f3a8a] text-[#d3d3f6]', body: NAVY_BODY, art: <path d="M11 35h3v4h-3zM35 35h3v4h-3z" fill="#a3a2dc" /> })),
  ],
  bars(9, 480, (i) => ({ x: 0, w: 48, label: i < 8 ? 'Noi..at' : '', icon: i < 8 ? 'pattern' : undefined, head: 'bg-[#353070] text-[#c9c9f0]', body: NAVY_BODY, art: <path d="M12 36h3v3h-3z" fill="#a3a2dc" /> })),
  [],
  [456, 648, 840, 864].map((x) => ({ x, w: 24, icon: x < 864 ? 'pattern' : undefined, head: 'bg-[#353070] text-[#cfcff6]', body: NAVY_BODY, art: <path d="M6 36h3v3h-3zM18 36h3v3h-3z" fill="#a3a2dc" /> })),
  [468, 660, 852].map((x) => ({ x, w: 6, head: 'bg-[#353070]', body: 'bg-[#1d2350]/70', art: <path d="M0 3h1l1 11 4 6-4 6-1 13H0z" fill="#a3a2dc" /> })),
  [{ x: 858, w: 48, icon: 'pattern', head: 'bg-[#353070] text-[#9493cf]', body: NAVY_BODY, art: <path d="M0 36h48v4H0z" fill="#8986cc" /> }],
  [{ x: 864, w: 48, head: 'bg-[#4744a0]', body: NAVY_BODY, art: <path d="M0 36h48v4H0z" fill="#8986cc" /> }],
  bars(9, 461, () => ({ x: 0, w: 8, head: 'bg-[#2f2b72]', body: 'bg-[#1f2152]/70', art: <path d="M0 22L1 10l2-6 2 10 1 7h2v1H6l-1 8-2 9-2-6z" fill="#9a92dc" /> })),
  bars(9, 474, () => ({ x: 0, w: 14, icon: 'audio', head: 'bg-[#312d78] text-[#b4b2e6]', body: 'bg-[#1f2152]/80', art: <path d="M0 2h1v14l3 4h9v1H4l-3 4v14H0z" fill="#a3a2dc" /> })),
  [],
];

function ClipView({ c }: { c: Clip }) {
  return (
    <div className={`absolute top-0 flex h-[54px] flex-col overflow-hidden border-r border-[#12193a] ${c.body}`} style={{ left: c.x, width: c.w }}>
      <div className={`flex h-[14px] shrink-0 items-center gap-[2px] pl-px text-[12px] leading-[14px] whitespace-nowrap ${c.head}`}>
        {c.icon && <Icon n={c.icon} s={10} />}
        <span className={c.faded ? 'opacity-40' : ''}>{c.label}</span>
      </div>
      <svg width={c.w} height="41" className="shrink-0">{c.art}</svg>
    </div>
  );
}

const GRID =
  'bg-[repeating-linear-gradient(90deg,#15232b_0_1px,transparent_1px_48px),repeating-linear-gradient(90deg,#263840_0_1px,transparent_1px_12px),linear-gradient(90deg,#33444d_0_96px,#2c3d46_96px_288px,#33444d_288px_480px,#2c3d46_480px_672px,#33444d_672px)]';

function MiniMap() {
  return (
    <svg viewBox="0 0 828 19" preserveAspectRatio="none" className="h-[19px] min-w-0 flex-1 bg-[#353f41]">
      <rect width="102" height="19" fill="#5a6672" />
      <path d="M0 2h56M56 2h660" stroke="#6b2f66" />
      <path d="M58 4h212M286 4h110M534 4h180" stroke="#41309a" strokeWidth="3" strokeDasharray="14 1 6 2" />
      <path d="M0 11h102" stroke="#8274c0" strokeWidth="3" />
      <path d="M102 10h608" stroke="#57407e" strokeWidth="2" />
      <path d="M56 13h110M238 13h134M486 12h60M570 13h140" stroke="#713f55" strokeWidth="2" />
      <path d="M120 14h70M396 14h90" stroke="#405c93" strokeWidth="2" />
      <path d="M190 17h30M300 17h80M520 17h100M640 17h74" stroke="#62506f" strokeDasharray="9 5" />
      {[0, 11, 56, 283, 397, 486, 530].map((x, i) => (
        <path key={x} d={`M${x} 0h6l-6 6z`} fill={i === 3 || i === 4 ? '#f0b878' : i === 0 || i === 2 ? '#f7efaa' : '#ffffff'} />
      ))}
    </svg>
  );
}

const FLAG = 'absolute top-[19px] flex h-[17px] items-center bg-[#35424a] text-[14px] text-[#d8dfe2]';

function Ruler() {
  return (
    <div className="relative h-[38px] shrink-0 overflow-hidden border-b border-[#131b20] bg-linear-to-b from-[#1d2a31] to-[#1c282e] text-[#98a3a9]">
      <div className="flex">
        {Array.from({ length: 19 }, (_, i) => (
          <span key={i} className={`w-12 shrink-0 leading-[22px] ${i % 4 === 2 ? 'text-[14px] text-[#b7c0c5]' : 'text-[12px]'}`}>
            {i + 1}
          </span>
        ))}
      </div>
      <svg viewBox="0 0 8 10" className="absolute top-0 left-0 h-[10px] w-2"><path d="M0 0h8L0 10z" fill="#b8e85a" /></svg>
      <span className={`${FLAG} left-0 w-[34px] [clip-path:polygon(0_0,75%_0,100%_100%,0_100%)]`}>Intro</span>
      <span className={`${FLAG} left-24 w-[38px] gap-px [clip-path:polygon(0_0,80%_0,100%_100%,0_100%)]`}>
        <Icon n="clock" s={11} />4/4
      </span>
      <span className={`${FLAG} left-[480px] w-9 [clip-path:polygon(0_0,78%_0,100%_100%,0_100%)]`}>Verse</span>
    </div>
  );
}

function Playlist() {
  const tools: [string, string][] = [
    ['pencil', ''],
    ['brush', 'text-[#6a9fc9]'],
    ['no', ''],
    ['mute', ''],
    ['stretch', ''],
    ['slice', ''],
    ['select', ''],
    ['zoom', ''],
    ['playback', ''],
  ];
  return (
    <section className="flex min-w-0 flex-1 flex-col border-l border-[#262e33] bg-[#454e54]">
      <div className="flex h-7 shrink-0 items-center pl-[11px] text-[#8a9398]">
        <Icon n="tri" s={9} />
        <button aria-label="Snap" className="ml-[10px]"><Icon n="magnet" s={14} /></button>
        <div className="ml-[18px] flex gap-[6px]">
          {tools.map(([n, c]) => (
            <button key={n} aria-label={n}><Icon n={n} s={15} c={c} /></button>
          ))}
        </div>
        <Icon n="speaker" s={15} c="ml-[18px]" />
        <h2 className="ml-[6px] flex items-center gap-[6px] font-['Noto_Sans',sans-serif] text-[13px] text-[#939ca1]">
          Playlist - Arrangement <Icon n="tri" s={8} c="opacity-60" /> Wood <Icon n="tri" s={8} c="opacity-60" />
        </h2>
        <div className="mr-2 ml-auto flex items-center gap-2">
          <button aria-label="Minimize"><Icon n="minTop" s={10} /></button>
          <button aria-label="Maximize"><Icon n="max" s={10} /></button>
          <button aria-label="Close"><Icon n="close" s={11} /></button>
        </div>
      </div>
      <div className="flex min-h-0 flex-1 gap-1 pb-[7px] pl-[5px]">
        <Picker />
        <div className="flex min-w-0 flex-1">
          <div className="flex w-[111px] shrink-0 flex-col border-r border-[#20282d] bg-[#2b3439]">
            <div className="relative h-[58px] shrink-0 bg-[#454e54]">
              <svg viewBox="0 0 111 58" className="absolute inset-0 h-full w-full">
                <path d="M1 58C1 48 10 38 17 20 22 7 24 1 34 1H111V58z" fill="#555f64" stroke="#2b3338" />
              </svg>
              <div className="relative flex justify-end gap-[10px] pt-px pr-1 text-[#7b848a]">
                <Icon n="wave" s={19} c="text-[#eef1f2]" />
                <Icon n="auto" s={17} />
                <Icon n="piano" s={15} />
              </div>
              <div className="relative flex justify-end gap-[5px] pt-[21px] pr-[2px] text-[9px] leading-3 text-[#c4cbce]">
                <label className="flex items-center gap-px">Z-CROSS<input type="checkbox" className="size-[11px] appearance-none rounded-[4px] border border-[#b4bcc0]" /></label>
                <label className="flex items-center gap-px">STRETCH<input type="checkbox" className="size-[11px] appearance-none rounded-[4px] border border-[#b4bcc0]" /></label>
              </div>
            </div>
            <div className="flex min-h-0 flex-1 flex-col overflow-hidden pr-[5px]">
              {TRACKS.map((t) => <TrackHead key={t[0]} t={t} />)}
            </div>
          </div>
          <div className="flex min-w-0 flex-1 flex-col border border-r-0 border-[#20282d]">
            <div className="flex h-[19px] shrink-0">
              <button aria-label="Scroll left" className="flex w-5 items-center justify-center border border-[#30383d] bg-[#566066] text-[#1f272b]"><Icon n="left" s={10} /></button>
              <MiniMap />
              <button aria-label="Scroll right" className="flex w-5 items-center justify-center border border-[#30383d] bg-[#566066] text-[#1f272b]"><Icon n="right" s={10} /></button>
            </div>
            <Ruler />
            <div className={`min-h-0 flex-1 overflow-hidden ${GRID}`}>
              {CLIPS.map((row, i) => (
                <div key={i} className="relative h-14 overflow-hidden border-b-2 border-[#17252c]/80">
                  {row.map((c, j) => <ClipView key={j} c={c} />)}
                </div>
              ))}
            </div>
          </div>
          <div className="mr-[5px] flex w-5 shrink-0 flex-col border border-[#262e33] bg-[#3a4142] text-[#1f272b]">
            <span className="flex h-5 items-center justify-center border-b border-[#262e33] bg-[#566066]"><span className="size-[3px] bg-[#1f272b]" /></span>
            <span className="flex h-5 items-center justify-center border-b border-[#262e33] bg-[#566066]"><Icon n="chevUp" s={11} /></span>
            <span className="h-8 border border-[#646d73] bg-[#525b61]" />
            <span className="mt-auto flex h-[19px] items-center justify-center border border-[#646d73] bg-[#566066]"><Icon n="chevDown" s={11} /></span>
          </div>
        </div>
      </div>
    </section>
  );
}

/* -------------------------------------------------------------- watermark */

function Badge() {
  return (
    <div className="absolute right-[58px] bottom-[31px] flex h-[126px] w-[384px] items-center rounded-[20px] bg-[#d4dada]/65 pl-[21px]">
      <svg viewBox="0 0 84 84" className="size-[84px]">
        <path d="M42 0C74 0 84 6 84 42S74 84 42 84 0 78 0 42 10 0 42 0z" fill="#1f7f4f" opacity=".85" />
        <path d="M16 38l10-11 15 17-20 24H9l20-15zM76 15H58L42 38l17 15 8-7-13-12z" fill="#b0b9bc" />
      </svg>
      <span className="ml-5 pb-2 font-['Ubuntu','Noto_Sans',sans-serif] text-[56px] leading-none font-medium text-[#454b66]/90">Softongo</span>
    </div>
  );
}

export default function App() {
  return (
    <div className={`relative flex h-screen flex-col overflow-hidden bg-[#454e54] ${FONT}`}>
      <TopBar />
      <main className="flex min-h-0 flex-1">
        <Browser />
        <div className="flex w-[9px] shrink-0 items-center justify-center border-x border-[#30383d] bg-[#475056]">
          <span className="h-4 border-l-2 border-dotted border-[#2b3439]" />
        </div>
        <ChannelRack />
        <Playlist />
      </main>
      <Badge />
    </div>
  );
}
